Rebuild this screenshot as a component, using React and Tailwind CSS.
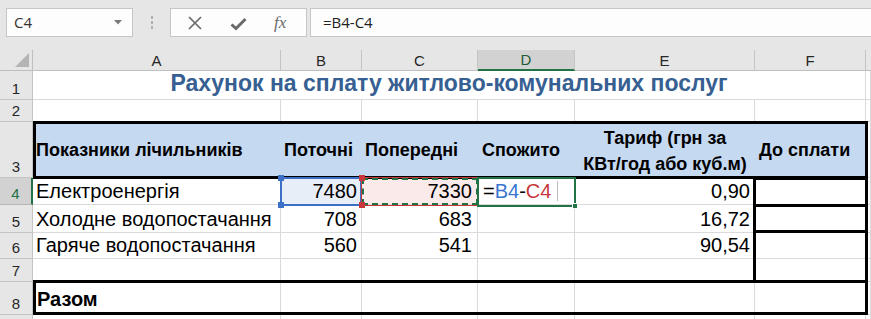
import React from "react";

const font = { fontFamily: '"Liberation Sans", Arial, sans-serif' };

const Cell = ({ className = "", children }) => (
    <div className={"border-r border-b border-[#dadada] overflow-visible whitespace-nowrap flex items-end pb-[3px] text-[20px] text-black leading-none " + className}>
        {children}
    </div>
);

const RowHead = ({ children, active, className = "" }) => (
    <div
        className={
            "flex items-end justify-center pb-[3px] text-[15px] leading-none border-b " +
            (active
                ? "bg-[#d2d2d2] text-[#217346] border-b-[#b5b5b5] border-r-2 border-r-[#217346] "
                : "bg-[#e6e6e6] text-[#262626] border-r border-[#c4c4c4] ") +
            className
        }
    >
        {children}
    </div>
);

const ColHead = ({ children, active }) => (
    <div
        className={
            "flex items-center justify-center text-[15px] leading-none border-r border-[#c4c4c4] " +
            (active ? "bg-[#d2d2d2] text-[#1e5a36] border-b-2 border-b-[#217346]" : "bg-[#e6e6e6] text-[#262626] border-b border-b-[#bfbfbf]")
        }
    >
        {children}
    </div>
);

const FormulaBar = () => (
    <div className="h-[50px] bg-[#e6e6e6] flex items-start pt-[8px] pl-[6px]">
        <div className="w-[127px] h-[29px] bg-[#fdfdfd] border border-[#c6c6c6] flex items-center justify-between pl-[7px] pr-[10px]">
            <span className="text-[15px] text-[#333]" style={{ fontFamily: '"Open Sans", "Noto Sans", sans-serif' }}>C4</span>
            <svg width="8" height="5" viewBox="0 0 8 5"><path d="M0 0h8L4 4.5z" fill="#7a7a7a" /></svg>
        </div>
        <div className="w-[37px] h-[29px] flex flex-col items-center justify-center gap-[2px]">
            <div className="w-[2px] h-[3px] bg-[#b0b0b0]" />
            <div className="w-[2px] h-[3px] bg-[#b0b0b0]" />
            <div className="w-[2px] h-[3px] bg-[#b0b0b0]" />
        </div>
        <div className="w-[137px] h-[29px] bg-[#fdfdfd] border border-[#c6c6c6] flex items-center pl-[17px]">
            <svg width="14" height="14" viewBox="0 0 14 14" className="mt-[1px]">
                <path d="M1 1L13 13M13 1L1 13" stroke="#6a6a6a" strokeWidth="1.7" />
            </svg>
            <svg width="17" height="14" viewBox="0 0 17 14" className="ml-[28px] mt-[2px]">
                <path d="M1.5 7.5L6 11.5L15.5 2" stroke="#6a6a6a" strokeWidth="3" fill="none" />
            </svg>
            <span className="ml-[27px] text-[17px] italic text-[#6a6a6a] leading-none" style={{ fontFamily: '"Liberation Serif", serif' }}>fx</span>
        </div>
        <div className="ml-[3px] flex-1 h-[29px] bg-[#fdfdfd] border-y border-l border-[#c6c6c6] flex items-center pl-[12px]">
            <span className="text-[15px] text-[#222]" style={{ fontFamily: '"Open Sans", "Noto Sans", sans-serif' }}>=B4-C4</span>
        </div>
    </div>
);

const Box = ({ className }) => <div className={"absolute pointer-events-none " + className} />;

const Handle = ({ className }) => <div className={"absolute w-[6px] h-[6px] " + className} />;

export default function App() {
    return (
        <div className="w-[871px] h-[319px] overflow-hidden bg-white" style={font}>
            <FormulaBar />
            <div className="relative grid grid-cols-[33px_248px_81px_116px_97px_180px_111px_5px] grid-rows-[21px_29px_22px_56px_27px_28px_26px_23px_33px_5px]">
                {/* column headers */}
                <div className="bg-[#e6e6e6] border-r border-b border-[#bfbfbf] flex items-end justify-end p-[3px]">
                    <svg width="14" height="14" viewBox="0 0 14 14"><path d="M14 0V14H0z" fill="#b4b4b4" /></svg>
                </div>
                <ColHead>A</ColHead>
                <ColHead>B</ColHead>
                <ColHead>C</ColHead>
                <ColHead active>D</ColHead>
                <ColHead>E</ColHead>
                <ColHead>F</ColHead>
                <div className="bg-[#e6e6e6] border-b border-[#bfbfbf]" />

                {/* row 1 */}
                <RowHead>1</RowHead>
                <Cell className="col-span-6 justify-center pb-[4px]">
                    <span className="text-[23px] font-bold text-[#376092]">Рахунок на сплату житлово-комунальних послуг</span>
                </Cell>
                <Cell />

                {/* row 2 */}
                <RowHead>2</RowHead>
                <Cell /><Cell /><Cell /><Cell /><Cell /><Cell /><Cell />

                {/* row 3 */}
                <RowHead>3</RowHead>
                <div className="col-span-6 bg-[#c5d9f1] flex items-center text-[18px] font-bold leading-none">
                    <div className="w-[248px] pl-[3px]">Показники лічильників</div>
                    <div className="w-[81px] pl-[3px]">Поточні</div>
                    <div className="w-[116px] pl-[3px]">Попередні</div>
                    <div className="w-[97px] pl-[4px]">Спожито</div>
                    <div className="w-[180px] text-center leading-[26px] pt-[2px]">Тариф (грн за<br />КВт/год або куб.м)</div>
                    <div className="w-[111px] pl-[4px]">До сплати</div>
                </div>
                <Cell />

                {/* row 4 */}
                <RowHead active>4</RowHead>
                <Cell className="pl-[3px]">Електроенергія</Cell>
                <Cell className="justify-end pr-[4px] bg-[#e8eef8]">7480</Cell>
                <Cell className="justify-end pr-[5px] bg-[#fbeaea]">7330</Cell>
                <Cell className="pl-[5px]">
                    <span>=</span><span className="text-[#3a74d0]">B4</span><span>-</span><span className="text-[#c8373a]">C4</span>
                    <span className="ml-[6px] w-px h-[20px] bg-[#bbb]" />
                </Cell>
                <Cell className="justify-end pr-[4px]">0,90</Cell>
                <Cell />
                <Cell />

                {/* row 5 */}
                <RowHead>5</RowHead>
                <Cell className="pl-[3px]">Холодне водопостачання</Cell>
                <Cell className="justify-end pr-[4px]">708</Cell>
                <Cell className="justify-end pr-[5px]">683</Cell>
                <Cell />
                <Cell className="justify-end pr-[4px]">16,72</Cell>
                <Cell />
                <Cell />

                {/* row 6 */}
                <RowHead>6</RowHead>
                <Cell className="pl-[3px]">Гаряче водопостачання</Cell>
                <Cell className="justify-end pr-[4px]">560</Cell>
                <Cell className="justify-end pr-[5px]">541</Cell>
                <Cell />
                <Cell className="justify-end pr-[4px]">90,54</Cell>
                <Cell />
                <Cell />

                {/* row 7 */}
                <RowHead>7</RowHead>
                <Cell /><Cell /><Cell /><Cell /><Cell /><Cell /><Cell />

                {/* row 8 */}
                <RowHead>8</RowHead>
                <Cell className="pl-[4px] pb-[5px] font-bold">Разом</Cell>
                <Cell /><Cell /><Cell /><Cell /><Cell /><Cell />

                {/* row 9 partial */}
                <RowHead />
                <Cell /><Cell /><Cell /><Cell /><Cell /><Cell /><Cell />

                {/* thick borders */}
                <Box className="left-[33px] top-[71px] w-[835px] h-[58px] border-[3px] border-black" />
                <Box className="left-[753px] top-[127px] w-[115px] h-[30px] border-[3px] border-black" />
                <Box className="left-[753px] top-[154px] w-[115px] h-[29px] border-[3px] border-black" />
                <Box className="left-[753px] top-[180px] w-[115px] h-[53px] border-[3px] border-black" />
                <Box className="left-[33px] top-[230px] w-[835px] h-[35px] border-[3px] border-black" />

                {/* B4 reference */}
                <Box className="left-[280px] top-[127px] w-[82px] h-[29px] border-2 border-[#3c6fc6]" />
                <Handle className="left-[278px] top-[125px] bg-[#3c6fc6]" />
                <Handle className="left-[278px] top-[152px] bg-[#3c6fc6]" />
                {/* C4 reference */}
                <Box className="left-[361px] top-[127px] w-[118px] h-[29px] border border-[#c8373a]" />
                <Box className="left-[362px] top-[128px] w-[116px] h-[27px] border-2 border-dashed border-[#217346]" />
                <Handle className="left-[359px] top-[125px] bg-[#c8373a]" />
                <Handle className="left-[359px] top-[152px] bg-[#c8373a]" />
                {/* active cell D4 */}
                <Box className="left-[477px] top-[127px] w-[99px] h-[30px] border-2 border-[#217346]" />
                <Handle className="left-[572px] top-[153px] w-[5px] h-[5px] bg-[#217346] border border-white" />
            </div>
        </div>
    );
}
